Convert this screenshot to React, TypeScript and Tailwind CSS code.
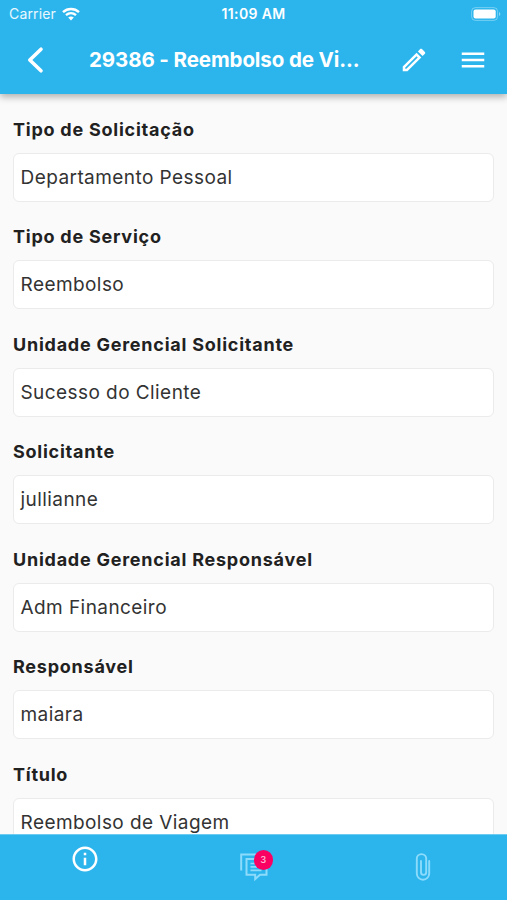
const fields = [
  { label: "Tipo de Solicitação", value: "Departamento Pessoal" },
  { label: "Tipo de Serviço", value: "Reembolso" },
  { label: "Unidade Gerencial Solicitante", value: "Sucesso do Cliente" },
  { label: "Solicitante", value: "jullianne" },
  { label: "Unidade Gerencial Responsável", value: "Adm Financeiro" },
  { label: "Responsável", value: "maiara" },
  { label: "Título", value: "Reembolso de Viagem" },
];

function StatusBar() {
  return (
    <div className="grid h-[28px] grid-cols-3 items-center px-[9px] text-[14px] leading-none text-white">
      <div className="flex items-center gap-[6px]">
        <span className="tracking-[0.15px] text-white/90">Carrier</span>
        <svg width="18" height="14" viewBox="0 0 18 14" fill="none" stroke="white" strokeWidth="2.4" className="-mt-px">
          <path d="M1 5.1C5.6.9 12.4.9 17 5.1" />
          <path d="M4 8.2c3-2.6 7-2.6 10 0" />
          <path d="M6.2 10.5c1.7-1.4 3.9-1.4 5.6 0L9 13.5z" fill="white" stroke="none" />
        </svg>
      </div>
      <span className="text-center font-semibold tracking-[0.35px]">11:09 AM</span>
      <div className="flex justify-end">
        <svg width="30" height="14" viewBox="0 0 30 14" className="-mt-px -mr-[3px]">
          <rect x=".6" y=".6" width="26" height="12.8" rx="3.8" fill="none" stroke="white" strokeOpacity=".35" />
          <rect x="2.5" y="2.5" width="22.2" height="9" rx="2" fill="white" />
          <path d="M28 5c1.8.6 1.8 3.4 0 4z" fill="white" fillOpacity=".45" />
        </svg>
      </div>
    </div>
  );
}

function Header() {
  return (
    <header className="relative z-10 h-[94px] shrink-0 bg-[#2cb5ed] text-white shadow-[0_3px_7px_rgba(0,0,0,0.3)]">
      <StatusBar />
      <div className="flex h-[64px] items-center pr-[19px] pl-[26px]">
        <svg width="18" height="28" viewBox="0 0 18 28" fill="none" stroke="white" strokeWidth="3.6" strokeLinecap="round" strokeLinejoin="round">
          <path d="M15 3.2 3.800 14 15 24.800" />
        </svg>
        <h1 className="ml-[45px] w-[300px] text-[20.5px] font-bold whitespace-nowrap tracking-[-0.1px]">29386 - Reembolso de Vi...</h1>
        <svg width="30" height="30" viewBox="0 0 24 24" fill="white" className="ml-[10px] shrink-0">
          <path d="M14.06 9.02l.92.92L5.92 19H5v-.92l9.06-9.06M17.66 3c-.25 0-.51.1-.7.29l-1.83 1.83 3.75 3.75 1.83-1.83a.996.996 0 0 0 0-1.41l-2.34-2.34c-.2-.2-.45-.29-.71-.29zm-3.6 3.19L3 17.25V21h3.75L17.81 9.94l-3.75-3.75z" />
        </svg>
        <svg width="30" height="30" viewBox="0 0 24 24" fill="white" className="ml-auto shrink-0">
          <path d="M3 18h18v-2H3v2zm0-5h18v-2H3v2zm0-7v2h18V6H3z" />
        </svg>
      </div>
    </header>
  );
}

function BottomBar() {
  return (
    <nav className="relative z-10 grid h-[66px] shrink-0 grid-cols-3 border-t border-[#6dcbf2] bg-[#2cb5ed]">
      <div className="flex justify-center pt-[9px]">
        <svg width="30" height="30" viewBox="0 0 24 24" fill="white">
          <path d="M11 7h2v2h-2zm0 4h2v6h-2zm1-9C6.48 2 2 6.48 2 12s4.48 10 10 10 10-4.48 10-10S17.52 2 12 2zm0 18c-4.41 0-8-3.59-8-8s3.59-8 8-8 8 3.59 8 8-3.59 8-8 8z" />
        </svg>
      </div>
      <div className="flex justify-center pt-[17px]">
        <div className="relative h-[30px] w-[28px]">
          <svg width="28" height="30" viewBox="0 0 28 30" fill="none" stroke="#8cdbfb" strokeWidth="2">
            <path d="M1.2 18.500V2.500h20" />
            <path d="M6.500 7h20V22.800h-6.500l-4.800 4.200V22.800H6.500z" />
            <path d="M10.500 11.500h12M10.500 14.800h12M10.500 18.300h11" strokeWidth="1.700" />
          </svg>
          <span className="absolute -top-[2px] left-[14px] flex size-[19.500px] items-center justify-center rounded-full bg-[#f90062] text-[9px] font-medium text-white/80">3</span>
        </div>
      </div>
      <div className="flex justify-center pt-[18px]">
        <svg width="16" height="29" viewBox="0 0 16 29" fill="none" stroke="#8cdbfb" strokeWidth="1.900" strokeLinecap="round">
          <path d="M14.200 8v12.500a6.200 6.200 0 0 1-12.400 0V5.800a4.700 4.700 0 0 1 9.400 0v13.500a2.600 2.600 0 0 1-5.200 0V8" />
        </svg>
      </div>
    </nav>
  );
}

export default function App() {
  return (
    <div className="flex h-[900px] w-[507px] flex-col overflow-hidden bg-[#fafafa] font-['Inter',sans-serif]">
      <Header />
      <main className="min-h-0 flex-1 overflow-hidden px-[13px] pt-[22.5px]">
        {fields.map((f) => (
          <div key={f.label} className="h-[107.5px]">
            <div className="h-[36px] text-[18px] leading-[25px] font-bold tracking-[0.76px] text-[#212121]">{f.label}</div>
            <div className="flex h-[49px] items-center rounded-[6px] border-[1.5px] border-[#ebebeb] bg-white px-[6.5px] pt-[2px] text-[19px] tracking-[0.43px] text-[#333]">
              {f.value}
            </div>
          </div>
        ))}
      </main>
      <BottomBar />
    </div>
  );
}
